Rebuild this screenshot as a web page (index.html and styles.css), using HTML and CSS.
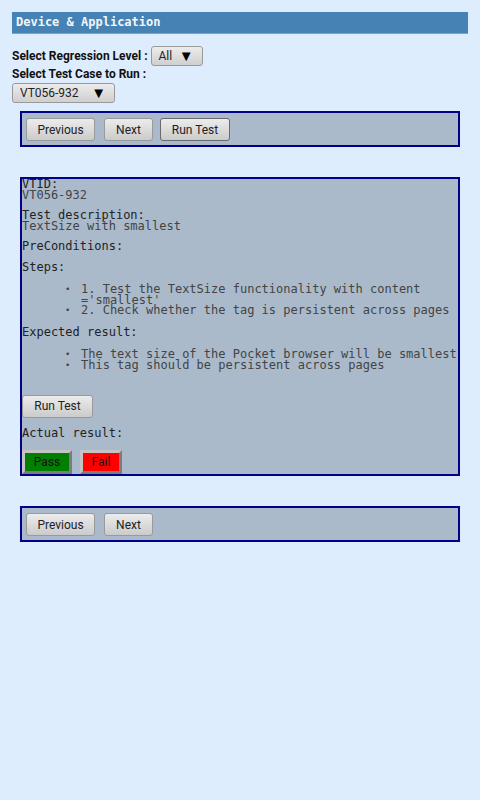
FILE: index.html
```html
<!DOCTYPE html>
<html>
<head>
<meta charset="utf-8">
<link rel="stylesheet" href="styles.css">
</head>
<body>
<div class="header">Device &amp; Application</div>
<div class="controls">
  <div class="row1">
    <span class="lbl-sans">Select Regression Level :</span>
    <span class="select sel-all"><span>All</span><span class="arrow">▼</span></span>
  </div>
  <div class="row2 lbl-sans">Select Test Case to Run :</div>
  <span class="select sel-case"><span>VT056-932</span><span class="arrow">▼</span></span>
</div>

<div class="panel nav">
  <button class="btn btn-prev">Previous</button>
  <button class="btn btn-next">Next</button>
  <button class="btn btn-run focused">Run Test</button>
</div>

<div class="panel details">
  <div class="field"><div class="lbl">VTID:</div><div class="val">VT056-932</div></div>
  <div class="field"><div class="lbl">Test description:</div><div class="val">TextSize with smallest</div></div>
  <div class="field"><div class="lbl">PreConditions:</div><div class="val"></div></div>
  <div class="lbl">Steps:</div>
  <ul class="list">
    <li>1. Test the TextSize functionality with content ='smallest'</li>
    <li>2. Check whether the tag is persistent across pages</li>
  </ul>
  <div class="lbl">Expected result:</div>
  <ul class="list">
    <li>The text size of the Pocket browser will be smallest</li>
    <li>This tag should be persistent across pages</li>
  </ul>
  <button class="btn btn-run2">Run Test</button>
  <div class="lbl actual">Actual result:</div>
  <div class="verdict">
    <button class="vbtn pass">Pass</button>
    <button class="vbtn fail">Fail</button>
  </div>
</div>

<div class="panel nav nav-bottom">
  <button class="btn btn-prev">Previous</button>
  <button class="btn btn-next">Next</button>
</div>
</body>
</html>
```

FILE: styles.css
```css
html, body {
  margin: 0;
  padding: 0;
}
body {
  background: #deedfd;
  padding: 12px;
  font-family: Roboto, "Liberation Sans", sans-serif;
  min-height: 800px;
  box-sizing: border-box;
}
.header {
  height: 21px;
  line-height: 21px;
  background: #4682b4;
  border-bottom: 1px solid #79a5cc;
  color: #f2f6fa;
  font-family: "DejaVu Sans Mono", monospace;
  font-weight: bold;
  font-size: 12px;
  padding-left: 4px;
}
.controls {
  margin-top: 12px;
}
.lbl-sans {
  font-size: 12px;
  font-weight: bold;
  color: #111;
}
.row1 {
  display: flex;
  align-items: center;
  gap: 3px;
  height: 20px;
}
.row2 {
  height: 16px;
  line-height: 16px;
}
.select {
  display: inline-flex;
  align-items: center;
  justify-content: space-between;
  height: 20px;
  box-sizing: border-box;
  border: 1px solid #9a9a9a;
  border-radius: 3px;
  background: linear-gradient(#ececec, #cfcfcf);
  font-size: 12px;
  color: #222;
  padding: 0 8px 0 7px;
}
.arrow {
  font-size: 15px;
  line-height: 1;
  color: #000;
}
.sel-all {
  width: 52px;
}
.sel-case {
  width: 103px;
}
.panel {
  margin: 8px 8px 0;
  border: 2px solid #00008b;
  background: #aabacb;
}
.nav {
  display: flex;
  gap: 8px;
  padding: 5px 4px 4px;
}
.btn {
  height: 23px;
  box-sizing: border-box;
  border: 1px solid #9a9a9a;
  border-radius: 3px;
  background: linear-gradient(#ececec, #cbcbcb);
  font-family: Roboto, "Liberation Sans", sans-serif;
  font-size: 12px;
  color: #222;
  padding: 0;
  margin: 0;
}
.btn-prev { width: 69px; }
.btn-next { width: 49px; margin-left: 1px; }
.btn-run { width: 70px; margin-left: -1px; }
.focused {
  border-color: #6a6a6a;
}
.details {
  margin-top: 30px;
  font-family: "DejaVu Sans Mono", monospace;
  font-size: 12px;
  line-height: 10.5px;
  color: #444;
  padding: 0;
}
.field {
  margin-bottom: 10px;
}
.lbl {
  color: #222;
}
.val {
  color: #444;
}
.list {
  margin: 12px 0 11px;
  padding-left: 59px;
  color: #444;
  list-style: none;
}
.list li {
  position: relative;
}
.list li::before {
  content: "•";
  position: absolute;
  left: -16px;
  top: 0;
  font-size: 9px;
}
.btn-run2 {
  display: block;
  width: 71px;
  margin-top: 24.5px;
}
.actual {
  margin-top: 10px;
}
.verdict {
  display: flex;
  gap: 8px;
  margin-top: 12px;
}
.vbtn {
  height: 24px;
  box-sizing: border-box;
  border: 3px solid;
  border-color: #c4c4c4 #7c7c7c #7c7c7c #c4c4c4;
  font-family: Roboto, "Liberation Sans", sans-serif;
  font-size: 12px;
  color: #111;
  padding: 0;
  margin: 0;
}
.pass {
  width: 50px;
  background: #008000;
}
.fail {
  width: 42px;
  background: #ff0000;
}
.nav-bottom {
  margin-top: 30px;
}
```
